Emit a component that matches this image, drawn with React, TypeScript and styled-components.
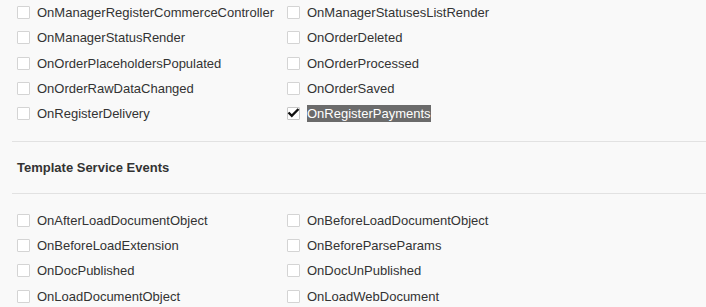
import React from "react";
import styled, { createGlobalStyle } from "styled-components";

const Global = createGlobalStyle`
  html, body { margin: 0; padding: 0; background: #f9f9f9; }
  body { font-family: "Liberation Sans", Arial, Helvetica, sans-serif; color: #333; }
`;

const Page = styled.div`
  width: 706px;
  height: 307px;
  overflow: hidden;
  padding-left: 12px;
  box-sizing: border-box;
`;

const Grid = styled.div`
  display: grid;
  grid-template-columns: 270px 270px;
  grid-auto-rows: 25.3px;
  padding-left: 5px;
`;

const Item = styled.label`
  display: flex;
  align-items: center;
  gap: 7px;
  font-size: 13px;
  color: #333;
  white-space: nowrap;
`;

const Box = styled.span<{ $checked?: boolean }>`
  width: 11px;
  height: 11px;
  border: 1px solid ${(p) => (p.$checked ? "#c8c8c8" : "#d4d4d4")};
  background: #fff;
  border-radius: 1px;
  position: relative;
  flex: none;
`;

const Label = styled.span<{ $selected?: boolean }>`
  padding: 1px 0;
  ${(p) => (p.$selected ? "background: #6b6b6b; color: #fff;" : "")}
`;

const Divider = styled.hr`
  border: none;
  border-top: 1px solid #e2e2e2;
  margin: 0;
`;

const Heading = styled.h3`
  margin: 0;
  padding: 0 0 0 5px;
  height: 51px;
  display: flex;
  align-items: center;
  font-size: 13px;
  font-weight: bold;
  color: #333;
`;

const Spacer = styled.div<{ $h: number }>`
  height: ${(p) => p.$h}px;
`;

const CheckMark = styled.svg`
  position: absolute;
  left: -1px;
  top: -1px;
`;

const Check = () => (
  <CheckMark width="13" height="11" viewBox="0 0 13 11">
    <path d="M1.5 5.5 L4.8 8.8 L11.5 2" fill="none" stroke="#111" strokeWidth="2.4" />
  </CheckMark>
);

type Ev = { name: string; checked?: boolean };

const top: Ev[] = [
  { name: "OnManagerRegisterCommerceController" },
  { name: "OnManagerStatusesListRender" },
  { name: "OnManagerStatusRender" },
  { name: "OnOrderDeleted" },
  { name: "OnOrderPlaceholdersPopulated" },
  { name: "OnOrderProcessed" },
  { name: "OnOrderRawDataChanged" },
  { name: "OnOrderSaved" },
  { name: "OnRegisterDelivery" },
  { name: "OnRegisterPayments", checked: true },
];

const bottom: Ev[] = [
  { name: "OnAfterLoadDocumentObject" },
  { name: "OnBeforeLoadDocumentObject" },
  { name: "OnBeforeLoadExtension" },
  { name: "OnBeforeParseParams" },
  { name: "OnDocPublished" },
  { name: "OnDocUnPublished" },
  { name: "OnLoadDocumentObject" },
  { name: "OnLoadWebDocument" },
];

const List = ({ items }: { items: Ev[] }) => (
  <Grid>
    {items.map((e) => (
      <Item key={e.name}>
        <Box $checked={e.checked}>{e.checked && <Check />}</Box>
        <Label $selected={e.checked}>{e.name}</Label>
      </Item>
    ))}
  </Grid>
);

export default function App() {
  return (
    <>
      <Global />
      <Page>
        <List items={top} />
        <Spacer $h={15} />
        <Divider />
        <Heading>Template Service Events</Heading>
        <Divider />
        <Spacer $h={13} />
        <List items={bottom} />
      </Page>
    </>
  );
}
